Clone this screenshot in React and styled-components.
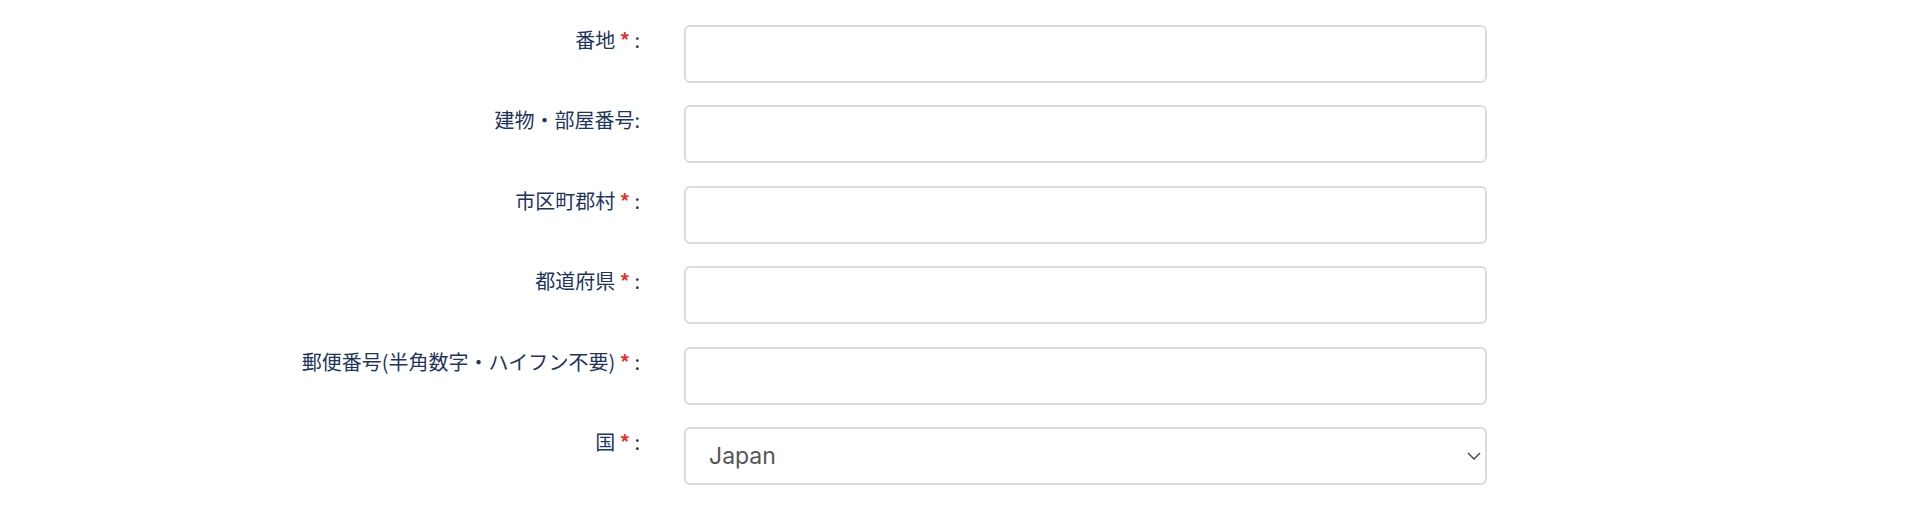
import styled, { createGlobalStyle } from "styled-components";

const GlobalStyle = createGlobalStyle`
  html, body {
    margin: 0;
    padding: 0;
    background: #ffffff;
  }
  body {
    font-family: "Noto Sans CJK JP", "Noto Sans", sans-serif;
  }
`;

const Form = styled.form`
  display: flex;
  flex-direction: column;
  gap: 22.4px;
  padding-top: 25px;
`;

const Row = styled.div`
  display: flex;
  align-items: flex-start;
  gap: 44px;
`;

const Label = styled.label`
  width: 640px;
  flex-shrink: 0;
  text-align: right;
  font-size: 20px;
  line-height: 30px;
  color: #1e3560;
`;

const Req = styled.span`
  color: #e8302a;
  font-weight: 700;
`;

const Input = styled.input`
  box-sizing: border-box;
  width: 803px;
  height: 58px;
  border: 2px solid #d8dce1;
  border-radius: 6px;
  background: #fff;
  padding: 0 23px;
  font-size: 20px;
  outline: none;
`;

const SelectWrap = styled.div`
  position: relative;
  width: 803px;
  height: 58px;
`;

const Select = styled.select`
  box-sizing: border-box;
  width: 100%;
  height: 100%;
  appearance: none;
  border: 2px solid #d8dce1;
  border-radius: 6px;
  background: #fff;
  padding: 0 23px;
  font-family: Inter, "Noto Sans", sans-serif;
  font-size: 23px;
  color: #555555;
  outline: none;
`;

const Chevron = styled.svg`
  position: absolute;
  right: 6px;
  top: 25px;
  pointer-events: none;
`;

const fields = [
  { name: "番地", required: true },
  { name: "建物・部屋番号", required: false },
  { name: "市区町郡村", required: true },
  { name: "都道府県", required: true },
  { name: "郵便番号(半角数字・ハイフン不要)", required: true },
];

export default function App() {
  return (
    <>
      <GlobalStyle />
      <Form>
        {fields.map((f) => (
          <Row key={f.name}>
            <Label>
              {f.required ? (
                <>
                  {f.name} <Req>*</Req> :
                </>
              ) : (
                `${f.name}:`
              )}
            </Label>
            <Input type="text" />
          </Row>
        ))}
        <Row>
          <Label>
            国 <Req>*</Req> :
          </Label>
          <SelectWrap>
            <Select defaultValue="Japan">
              <option value="Japan">Japan</option>
            </Select>
            <Chevron width="14" height="8" viewBox="0 0 14 8" fill="none">
              <path d="M1 1l6 6 6-6" stroke="#555" strokeWidth="1.6" />
            </Chevron>
          </SelectWrap>
        </Row>
      </Form>
    </>
  );
}
